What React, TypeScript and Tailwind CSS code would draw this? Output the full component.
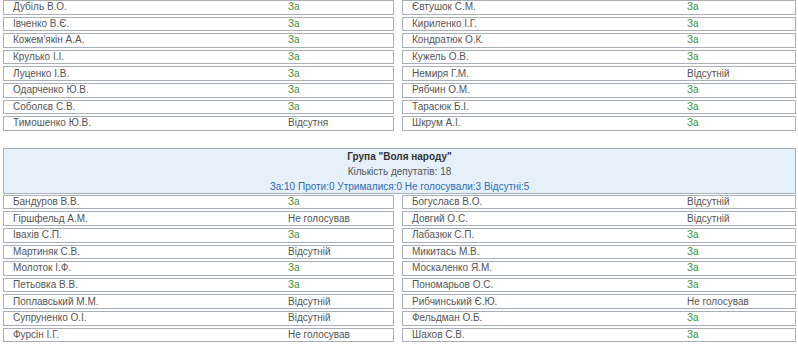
import React from "react";

type Row = [string, string];

const topLeft: Row[] = [
  ["Дубіль В.О.", "За"],
  ["Івченко В.Є.", "За"],
  ["Кожем'якін А.А.", "За"],
  ["Крулько І.І.", "За"],
  ["Луценко І.В.", "За"],
  ["Одарченко Ю.В.", "За"],
  ["Соболєв С.В.", "За"],
  ["Тимошенко Ю.В.", "Відсутня"],
];
const topRight: Row[] = [
  ["Євтушок С.М.", "За"],
  ["Кириленко І.Г.", "За"],
  ["Кондратюк О.К.", "За"],
  ["Кужель О.В.", "За"],
  ["Немиря Г.М.", "Відсутній"],
  ["Рябчин О.М.", "За"],
  ["Тарасюк Б.І.", "За"],
  ["Шкрум А.І.", "За"],
];
const botLeft: Row[] = [
  ["Бандуров В.В.", "За"],
  ["Гіршфельд А.М.", "Не голосував"],
  ["Івахів С.П.", "За"],
  ["Мартиняк С.В.", "Відсутній"],
  ["Молоток І.Ф.", "За"],
  ["Петьовка В.В.", "За"],
  ["Поплавський М.М.", "Відсутній"],
  ["Супруненко О.І.", "Відсутній"],
  ["Фурсін І.Г.", "Не голосував"],
];
const botRight: Row[] = [
  ["Богуслаєв В.О.", "Відсутній"],
  ["Довгий О.С.", "Відсутній"],
  ["Лабазюк С.П.", "За"],
  ["Микитась М.В.", "За"],
  ["Москаленко Я.М.", "За"],
  ["Пономарьов О.С.", "За"],
  ["Рибчинський Є.Ю.", "Не голосував"],
  ["Фельдман О.Б.", "За"],
  ["Шахов С.В.", "За"],
];

function Column({ rows }: { rows: Row[] }) {
  return (
    <div className="flex flex-col gap-[2px]">
      {rows.map(([n, v]) => (
        <div
          key={n}
          className="flex h-[14.6px] items-center border border-[#a9afb6] bg-white"
        >
          <div className="w-[284px] pl-[9px] text-[#555]">{n}</div>
          <div className={v === "За" ? "text-[#3d8f3d]" : "text-[#555]"}>{v}</div>
        </div>
      ))}
    </div>
  );
}

function Pair({ left, right }: { left: Row[]; right: Row[] }) {
  return (
    <div className="flex gap-[8px]">
      <div className="w-[391px]">
        <Column rows={left} />
      </div>
      <div className="w-[394px]">
        <Column rows={right} />
      </div>
    </div>
  );
}

export default function App() {
  return (
    <div
      className="w-[798px] h-[345px] overflow-hidden bg-white pl-[3px] text-[10px] leading-none"
      style={{ fontFamily: '"Liberation Sans", Arial, sans-serif' }}
    >
      <Pair left={topLeft} right={topRight} />
      <div className="mt-[17px] w-[793px] h-[46px] border border-[#a9afb6] bg-[#e6f0fa] flex flex-col items-center pt-[3px] gap-[5px]">
        <div className="font-bold text-[#333]">Група "Воля народу"</div>
        <div className="text-[#555]">Кількість депутатів: 18</div>
        <div className="text-[#2f6cb0]">
          За:10 Проти:0 Утрималися:0 Не голосували:3 Відсутні:5
        </div>
      </div>
      <div className="mt-[1px]">
        <Pair left={botLeft} right={botRight} />
      </div>
    </div>
  );
}
